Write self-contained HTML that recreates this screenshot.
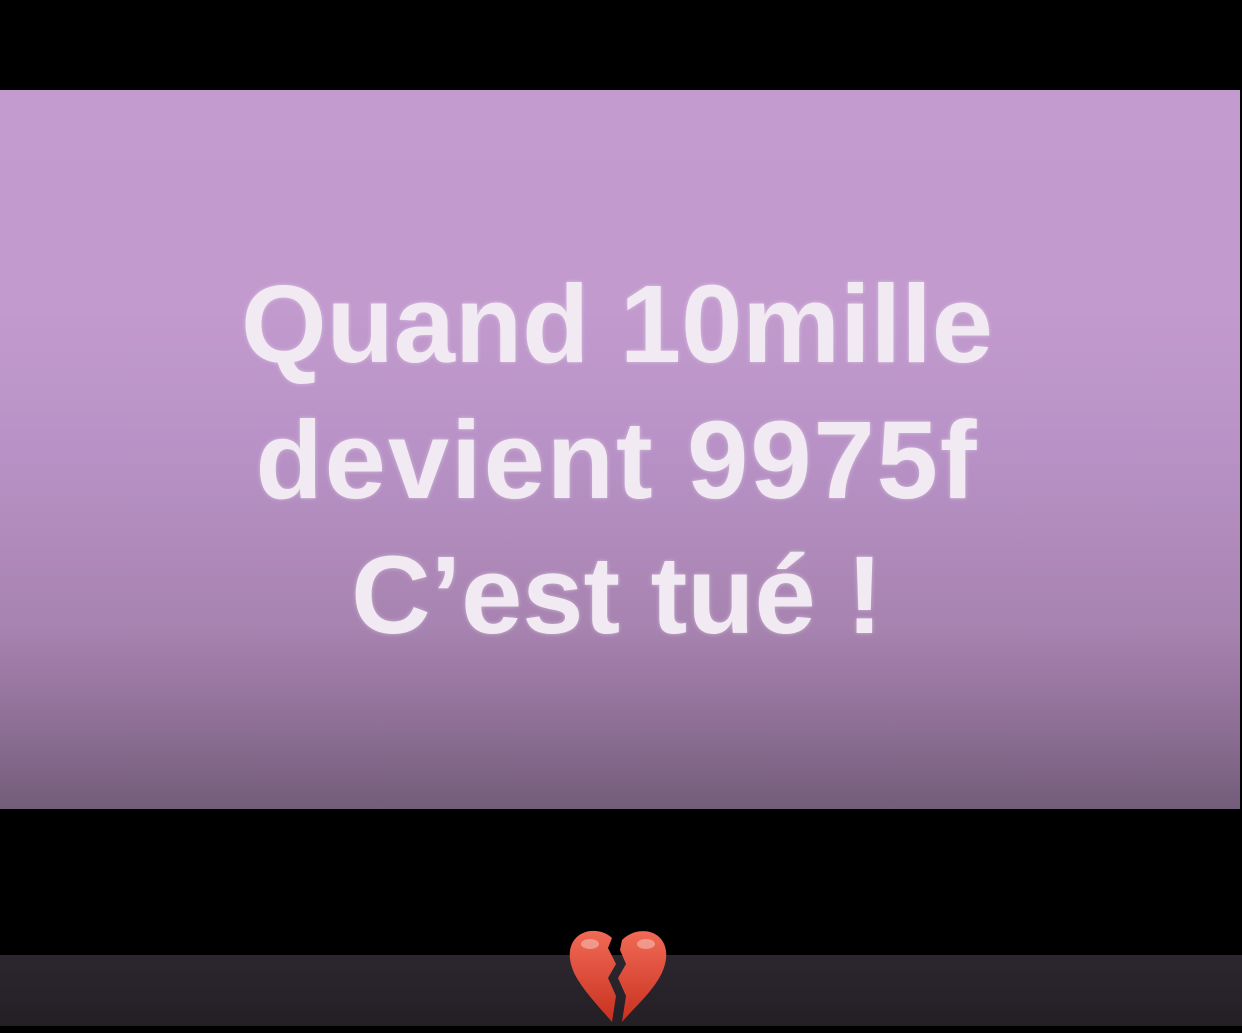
<!DOCTYPE html>
<html><head><meta charset="utf-8"><style>
html,body{margin:0;padding:0;background:#000;width:1242px;height:1033px;overflow:hidden;position:relative}
.card{position:absolute;left:0;top:90px;width:1240px;height:719px;
background:linear-gradient(180deg,#c39bcf 0%,#c29ace 30%,#b892c6 50%,#a783b0 75%,#8f6f96 88%,#725d7a 100%)}
.t{position:absolute;left:0;width:1240px;text-align:center;color:#f2eaf3;font-family:"Liberation Sans",sans-serif;font-weight:bold;font-size:110px;line-height:1;text-shadow:0 0 4px rgba(255,255,255,.4)}
.band{position:absolute;left:0;top:955px;width:1242px;height:71px;background:linear-gradient(180deg,#2c272e,#231f25)}
</style></head><body>
<div class="card"></div>
<div class="t" style="top:270px;left:-3px">Quand 10mille</div>
<div class="t" style="top:406px;left:-3px;letter-spacing:2px">devient 9975f</div>
<div class="t" style="top:541px;left:-3px">C’est tué !</div>
<div class="band"></div>
<svg style="position:absolute;left:566px;top:928px" width="104" height="96" viewBox="0 0 104 96">
<defs><linearGradient id="g" x1="0" y1="0" x2="0" y2="1"><stop offset="0" stop-color="#f06a55"/><stop offset="1" stop-color="#c9301f"/></linearGradient></defs>
<path d="M46 10 C38 2 22 0 12 8 C0 18 2 36 12 52 C22 68 36 82 46 94 L50 68 L42 50 L50 36 L42 20 Z" fill="url(#g)"/>
<path d="M56 12 C66 2 82 0 92 8 C104 18 102 36 92 52 C82 68 66 82 56 94 L60 68 L52 50 L60 36 L54 22 Z" fill="url(#g)"/>
<ellipse cx="24" cy="16" rx="9" ry="5" fill="#fff" opacity=".35"/>
<ellipse cx="80" cy="16" rx="9" ry="5" fill="#fff" opacity=".35"/>
</svg>
</body></html>
